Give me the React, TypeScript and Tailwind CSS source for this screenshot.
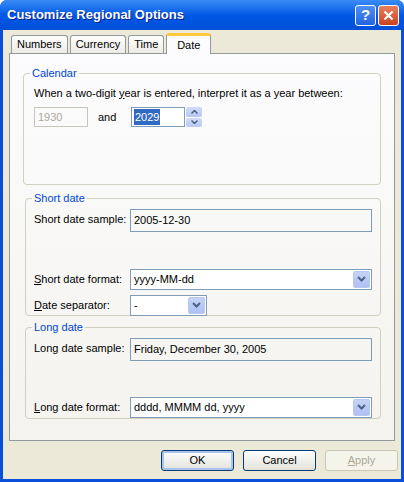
import React from "react";

const Arrow = () => (
  <div className="w-[17px] h-[17px] rounded-[2px] bg-gradient-to-b from-[#c6d3f7] to-[#aec0f2] border border-[#b7c8f5] flex items-center justify-center">
    <svg width="9" height="6" viewBox="0 0 9 6"><path d="M1 1 L4.5 4.5 L8 1" stroke="#4d6185" strokeWidth="2" fill="none" /></svg>
  </div>
);

const Combo = ({ text, w }: { text: string; w: string }) => (
  <div className={`${w} h-[21px] border border-[#7f9db9] bg-white flex items-center justify-between pl-[3px] pr-[1px]`}>
    <span>{text}</span>
    <Arrow />
  </div>
);

const Group = ({ title, className, children }: { title: string; className: string; children: React.ReactNode }) => (
  <fieldset className={`border border-[#d0d0bf] rounded-[4px] px-[8px] ${className}`}>
    <legend className="text-[#0046d5] px-[2px] ml-[-2px]">{title}</legend>
    {children}
  </fieldset>
);

const U = ({ c }: { c: string }) => <span className="underline">{c}</span>;

export default function App() {
  return (
    <div className="w-[404px] h-[482px] bg-[#0a4fd9] rounded-t-[7px] flex flex-col text-[11px] text-black" style={{ fontFamily: '"Liberation Sans", Arial, sans-serif' }}>
      <div className="h-[30px] flex items-center justify-between pl-[7px] pr-[5px] rounded-t-[7px] bg-gradient-to-b from-[#3a8cf5] via-[#0058e6] to-[#0050d8]">
        <span className="text-white font-bold text-[13px] [text-shadow:1px_1px_#0a1e8c]">Customize Regional Options</span>
        <div className="flex gap-[2px]">
          <div className="w-[21px] h-[21px] rounded-[3px] border border-white bg-gradient-to-b from-[#4f8ff5] to-[#2463e0] text-white font-bold text-[15px] flex items-center justify-center">?</div>
          <div className="w-[21px] h-[21px] rounded-[3px] border border-white bg-gradient-to-b from-[#e9805e] to-[#c8401b] flex items-center justify-center">
            <svg width="11" height="11" viewBox="0 0 11 11"><path d="M1.5 1.5 L9.5 9.5 M9.5 1.5 L1.5 9.5" stroke="white" strokeWidth="2.2" /></svg>
          </div>
        </div>
      </div>
      <div className="flex-1 mx-[3px] mb-[3px] bg-[#ece9d8] flex flex-col px-[6px]">
        <div className="flex items-end h-[23px] pl-[2px] gap-[2px]">
          {["Numbers", "Currency", "Time"].map((t) => (
            <div key={t} className="h-[18px] px-[5px] border border-[#919b9c] border-b-0 rounded-t-[3px] bg-gradient-to-b from-white to-[#ecebe6] flex items-center">{t}</div>
          ))}
          <div className="h-[21px] w-[45px] mb-[-1px] z-10 border border-[#919b9c] border-b-0 border-t-[3px] border-t-[#ffc83c] rounded-t-[3px] bg-[#fcfcfe] flex items-center justify-center">Date</div>
        </div>
        <div className="h-[388px] border border-[#919b9c] bg-gradient-to-b from-[#fcfcfe] to-[#f4f3ee] flex flex-col px-[12px] pt-[11px]">
          <Group title="Calendar" className="h-[120px] ml-[1px] mr-[1px] pt-[3px]">
            <div className="ml-[2px]">When a two-digit <U c="y" />ear is entered, interpret it as a year between:</div>
            <div className="flex items-center mt-[6px] ml-[2px]">
              <div className="w-[54px] h-[20px] border border-[#c9c7ba] text-[#aca899] flex items-center pl-[3px]">1930</div>
              <span className="ml-[10px] w-[33px]">and</span>
              <div className="w-[54px] h-[20px] border border-[#7f9db9] bg-white flex items-center pl-[2px]"><span className="bg-[#316ac5] text-white px-[1px]">2029</span></div>
              <div className="ml-[1px] w-[16px] h-[20px] flex flex-col gap-[1px]">
                <div className="flex-1 rounded-[2px] bg-gradient-to-b from-[#d0dcf8] to-[#b6c7f3] flex items-center justify-center"><svg width="7" height="4"><path d="M0.5 3.5 L3.5 0.5 L6.5 3.5" stroke="#4d6185" strokeWidth="1.5" fill="none" /></svg></div>
                <div className="flex-1 rounded-[2px] bg-gradient-to-b from-[#d0dcf8] to-[#b6c7f3] flex items-center justify-center"><svg width="7" height="4"><path d="M0.5 0.5 L3.5 3.5 L6.5 0.5" stroke="#4d6185" strokeWidth="1.5" fill="none" /></svg></div>
              </div>
            </div>
          </Group>
          <Group title="Short date" className="h-[126px] mt-[5px] mx-[3px] pt-[2px]">
            <div className="flex items-start">
              <span className="w-[96px] pt-[2px]">Short date sample:</span>
              <div className="w-[242px] h-[23px] border border-[#7f9db9] pl-[3px] pt-[2px]">2005-12-30</div>
            </div>
            <div className="flex items-center mt-[37px]">
              <span className="w-[96px]"><U c="S" />hort date format:</span>
              <Combo text="yyyy-MM-dd" w="w-[242px]" />
            </div>
            <div className="flex items-center mt-[5px]">
              <span className="w-[96px]"><U c="D" />ate separator:</span>
              <Combo text="-" w="w-[77px]" />
            </div>
          </Group>
          <Group title="Long date" className="h-[100px] mt-[3px] mx-[3px] pt-[2px]">
            <div className="flex items-start">
              <span className="w-[96px] pt-[2px]">Long date sample:</span>
              <div className="w-[242px] h-[23px] border border-[#7f9db9] pl-[3px] pt-[2px]">Friday, December 30, 2005</div>
            </div>
            <div className="flex items-center mt-[36px]">
              <span className="w-[96px]"><U c="L" />ong date format:</span>
              <Combo text="dddd, MMMM dd, yyyy" w="w-[242px]" />
            </div>
          </Group>
        </div>
        <div className="flex justify-end gap-[9px] mt-[9px] mr-[-3px]">
          <div className="w-[73px] h-[21px] rounded-[3px] border border-[#003c74] bg-gradient-to-b from-white to-[#e3e2da] shadow-[inset_0_0_0_2px_#a9c3f0] flex items-center justify-center">OK</div>
          <div className="w-[73px] h-[21px] rounded-[3px] border border-[#003c74] bg-gradient-to-b from-white to-[#e3e2da] flex items-center justify-center">Cancel</div>
          <div className="w-[73px] h-[21px] rounded-[3px] border border-[#c9c7ba] bg-[#f5f4ea] text-[#aca899] flex items-center justify-center"><U c="A" />pply</div>
        </div>
      </div>
    </div>
  );
}
